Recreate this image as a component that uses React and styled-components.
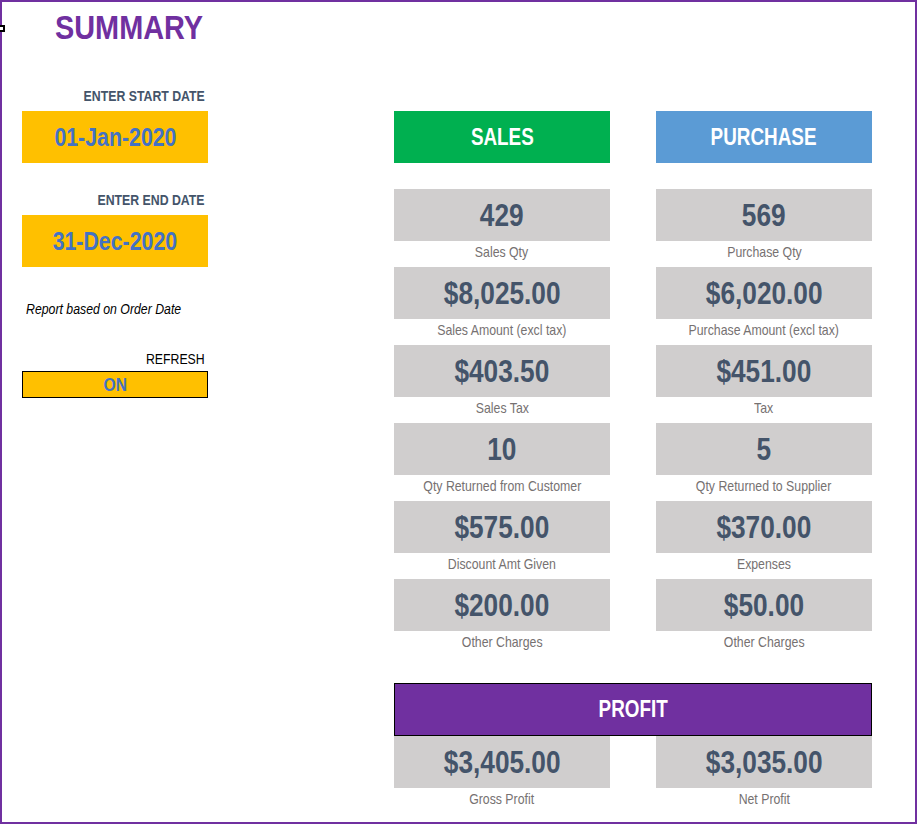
import React from "react";
import styled, { createGlobalStyle } from "styled-components";

// Arial Narrow is not installed; Liberation Sans squeezed horizontally
// gives the same letterforms and widths.
const FONT = `"Liberation Sans", Arial, sans-serif`;

const COLORS = {
  frame: "#7030A0",
  yellow: "#FFC000",
  dateText: "#4472C4",
  slate: "#44546A",
  label: "#767171",
  cell: "#D0CECE",
  sales: "#00B050",
  purchase: "#5B9BD5",
  profit: "#7030A0",
};

const salesRows = [
  { value: "429", label: "Sales Qty" },
  { value: "$8,025.00", label: "Sales Amount (excl tax)" },
  { value: "$403.50", label: "Sales Tax" },
  { value: "10", label: "Qty Returned from Customer" },
  { value: "$575.00", label: "Discount Amt Given" },
  { value: "$200.00", label: "Other Charges" },
];

const purchaseRows = [
  { value: "569", label: "Purchase Qty" },
  { value: "$6,020.00", label: "Purchase Amount (excl tax)" },
  { value: "$451.00", label: "Tax" },
  { value: "5", label: "Qty Returned to Supplier" },
  { value: "$370.00", label: "Expenses" },
  { value: "$50.00", label: "Other Charges" },
];

const Stat = ({ value, label }) => (
  <StatCell>
    <StatValue>
      <Narrow>{value}</Narrow>
    </StatValue>
    <StatLabel>
      <Narrow>{label}</Narrow>
    </StatLabel>
  </StatCell>
);

const App = () => {
  // rows are interleaved so the grid fills sales / purchase side by side
  const pairs = salesRows.map((row, i) => [row, purchaseRows[i]]);

  return (
    <>
      <GlobalStyle />
      <Frame>
        <CellHandle />
        <Title>
          <Narrow origin="left" scale={0.875}>
            SUMMARY
          </Narrow>
        </Title>
        <Body>
          <LeftPanel>
            <FieldLabel>
              <Narrow origin="right">ENTER START DATE</Narrow>
            </FieldLabel>
            <DateBox>
              <Narrow>01-Jan-2020</Narrow>
            </DateBox>
            <FieldLabel spaced>
              <Narrow origin="right">ENTER END DATE</Narrow>
            </FieldLabel>
            <DateBox>
              <Narrow>31-Dec-2020</Narrow>
            </DateBox>
            <Note>
              <Narrow origin="left">Report based on Order Date</Narrow>
            </Note>
            <RefreshLabel>
              <Narrow origin="right">REFRESH</Narrow>
            </RefreshLabel>
            <Toggle>
              <Narrow>ON</Narrow>
            </Toggle>
          </LeftPanel>
          <RightPanel>
            <Header color={COLORS.sales}>
              <Narrow>SALES</Narrow>
            </Header>
            <Header color={COLORS.purchase}>
              <Narrow>PURCHASE</Narrow>
            </Header>
            {pairs.map(([s, p], i) => (
              <React.Fragment key={i}>
                <Stat value={s.value} label={s.label} />
                <Stat value={p.value} label={p.label} />
              </React.Fragment>
            ))}
            <ProfitHeader>
              <Narrow>PROFIT</Narrow>
            </ProfitHeader>
            <Stat value="$3,405.00" label="Gross Profit" />
            <Stat value="$3,035.00" label="Net Profit" />
          </RightPanel>
        </Body>
      </Frame>
    </>
  );
};

const GlobalStyle = createGlobalStyle`
  body {
    margin: 0;
    background: #ffffff;
    font-family: ${FONT};
  }
`;

const Narrow = styled.span`
  display: inline-block;
  white-space: nowrap;
  transform: scaleX(${(p) => p.scale || 0.82});
  transform-origin: ${(p) => p.origin || "center"};
`;

const Frame = styled.div`
  position: relative;
  width: 917px;
  height: 824px;
  box-sizing: border-box;
  border: 2px solid ${COLORS.frame};
  background: #ffffff;
  font-family: ${FONT};
  display: flex;
  flex-direction: column;
`;

const CellHandle = styled.span`
  position: absolute;
  left: -5px;
  top: 23px;
  width: 4px;
  height: 3px;
  border: 2px solid #000;
  background: #fff;
`;

const Title = styled.h1`
  margin: 0;
  padding: 9px 0 0 53px;
  font-size: 33px;
  line-height: 33px;
  font-weight: 700;
  color: ${COLORS.frame};
`;

const Body = styled.div`
  display: flex;
  margin-top: 43px;
`;

const LeftPanel = styled.div`
  width: 186px;
  margin-left: 20px;
  display: flex;
  flex-direction: column;
`;

const FieldLabel = styled.div`
  font-size: 15px;
  line-height: 18px;
  font-weight: 700;
  color: ${COLORS.slate};
  text-align: right;
  padding-right: 3px;
  margin-top: ${(p) => (p.spaced ? "28px" : "0")};
  margin-bottom: 6px;
`;

const DateBox = styled.div`
  height: 52px;
  line-height: 52px;
  background: ${COLORS.yellow};
  color: ${COLORS.dateText};
  font-size: 26px;
  font-weight: 700;
  text-align: center;
`;

const Note = styled.div`
  margin-top: 33px;
  padding-left: 4px;
  font-size: 15px;
  line-height: 18px;
  font-style: italic;
  color: #000;
`;

const RefreshLabel = styled.div`
  margin-top: 32px;
  font-size: 15px;
  line-height: 18px;
  color: #000;
  text-align: right;
  padding-right: 3px;
`;

const Toggle = styled.div`
  margin-top: 3px;
  height: 27px;
  box-sizing: border-box;
  border: 1px solid #000;
  background: ${COLORS.yellow};
  color: ${COLORS.dateText};
  font-size: 19px;
  line-height: 25px;
  font-weight: 700;
  text-align: center;
`;

const RightPanel = styled.div`
  margin-left: 186px;
  padding-top: 24px;
  display: grid;
  grid-template-columns: 216px 216px;
  column-gap: 46px;
  align-content: start;
`;

const Header = styled.div`
  height: 52px;
  line-height: 52px;
  margin-bottom: 26px;
  background: ${(p) => p.color};
  color: #ffffff;
  font-size: 23px;
  font-weight: 700;
  text-align: center;
`;

const ProfitHeader = styled.div`
  grid-column: 1 / -1;
  margin-top: 26px;
  height: 53px;
  box-sizing: border-box;
  border: 1px solid #000;
  background: ${COLORS.profit};
  color: #ffffff;
  font-size: 23px;
  line-height: 51px;
  font-weight: 700;
  text-align: center;
`;

const StatCell = styled.div`
  display: flex;
  flex-direction: column;
`;

const StatValue = styled.div`
  height: 52px;
  line-height: 52px;
  background: ${COLORS.cell};
  color: ${COLORS.slate};
  font-size: 32px;
  font-weight: 700;
  text-align: center;
`;

const StatLabel = styled.div`
  height: 26px;
  line-height: 22px;
  font-size: 15px;
  color: ${COLORS.label};
  text-align: center;
`;

export default App;
